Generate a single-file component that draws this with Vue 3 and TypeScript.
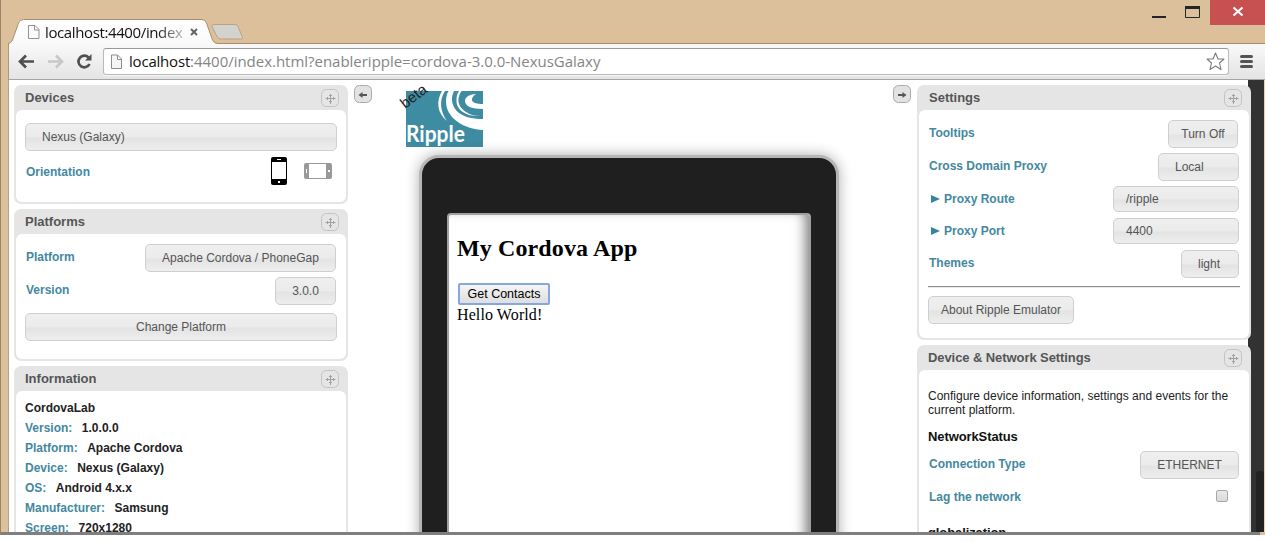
<script setup lang="ts">
interface InfoLine { label: string; value: string }

const info: InfoLine[] = [
  { label: 'Version:', value: '1.0.0.0' },
  { label: 'Platform:', value: 'Apache Cordova' },
  { label: 'Device:', value: 'Nexus (Galaxy)' },
  { label: 'OS:', value: 'Android 4.x.x' },
  { label: 'Manufacturer:', value: 'Samsung' },
  { label: 'Screen:', value: '720x1280' },
]
const moveIcon = 'M9.500 5V15M4.500 9.500H14.500M8 6.500H11M8 12.500H11M6.500 8V11M12.500 8V11'
</script>

<template>
  <div class="window">
    <header class="titlebar">
      <svg class="tabs" width="260" height="26" viewBox="0 0 260 26">
        <defs>
          <linearGradient id="tabfill" x1="0" y1="0" x2="0" y2="1">
            <stop offset="0" stop-color="#fff" /><stop offset="1" stop-color="#f9f9f9" />
          </linearGradient>
        </defs>
        <path d="M8.500 26V25L12 22L18.500 4Q20 .5 23.500 .5H202Q205 .5 206.500 4L212.500 21Q214 24.500 218 24.500V26Z" fill="url(#tabfill)" />
        <path d="M8.500 26V24.500Q11 24 12.500 21L18.500 4Q20 .5 23.500 .5H202Q205 .5 206.500 4L212.500 21Q214 24.500 218 24.500H260" fill="none" stroke="#a88e6e" />
        <path d="M213.500 5.500H235Q237 5.500 238 7.500L242.500 18.500Q243 20 241 20H221Q218 20 217 17.500L212 7.500Q211.500 5.500 213.500 5.500Z" fill="#d2d2ce" stroke="#bca27f" />
        <path d="M28.500 6.500H35L39 10.500V19.500H28.500ZM34.500 6.500V11H39" fill="#fafafa" stroke="#919191" />
        <path d="M191 10L197 16M197 10L191 16" stroke="#626262" stroke-width="1.900" />
      </svg>
      <span class="tabtext">localhost:4400/index</span>
      <svg class="winbtns" width="120" height="26" viewBox="0 0 120 26">
        <rect x="65" y="0" width="55" height="25" fill="#c75050" />
        <rect x="7" y="16" width="14" height="2" fill="#222628" />
        <path d="M40.500 7V17.500H54.500V7" fill="none" stroke="#222628" /><rect x="40" y="6" width="15" height="3" fill="#222628" />
        <path d="M88.500 7.500L97.500 15.500M97.500 7.500L88.500 15.500" stroke="#fff" stroke-width="2.100" />
      </svg>
    </header>

    <div class="toolbar">
      <svg class="nav" width="95" height="35" viewBox="0 0 95 35">
        <g fill="none" stroke-width="2.700">
          <path d="M26 17.500H12.500M18 11.500L12 17.500L18 23.500" stroke="#505050" />
          <path d="M40 17.500H53.500M48 11.500L54 17.500L48 23.500" stroke="#c8c8c8" />
          <path d="M80.500 13.500A5.800 5.800 0 1 0 81.500 20" stroke="#505050" />
        </g>
        <path d="M77 16.500H83.500V10Z" fill="#505050" />
      </svg>
      <div class="urlbox">
        <svg width="13" height="16" viewBox="0 0 13 16"><path d="M1.500 1H7.500L11.500 5V14.500H1.500ZM7.500 1V5.500H11.500" fill="#f5f5f5" stroke="#8d8d8d" /></svg>
        <span class="url"><b>localhost</b>:4400/index.html?enableripple=cordova-3.0.0-NexusGalaxy</span>
        <svg class="star" width="19" height="19" viewBox="0 0 19 19"><path d="M9.500 1L12 7H18L13.500 11L15 17.500L9.500 14L4 17.500L5.500 11L1 7H7Z" fill="#fff" stroke="#7c7c7c" stroke-width="1.100" stroke-linejoin="round" /></svg>
      </div>
      <svg class="menu" width="13" height="13" viewBox="0 0 13 13"><path d="M1.500 1.500H11.500M1.500 6.500H11.500M1.500 11.500H11.500" stroke="#555" stroke-width="3" stroke-linecap="round" /></svg>
    </div>

    <main class="page">
      <aside class="col left">
        <section class="panel devices">
          <h3>Devices<svg width="18" height="18" viewBox="0 0 18 18"><rect x=".5" y=".5" width="17" height="17" rx="5" /><path :d="moveIcon" /></svg></h3>
          <div class="body">
            <button class="btn wide lefttext">Nexus (Galaxy)</button>
            <div class="orient"><label>Orientation</label>
              <svg class="phone" width="16" height="28" viewBox="0 0 16 28"><rect width="16" height="28" rx="2" /><rect x="1" y="5" width="14" height="17" fill="#fff" /><path d="M6 2.500H10" stroke="#fff" /><rect x="7" y="24" width="2" height="2" fill="#fff" /></svg>
              <svg class="land" width="28" height="16" viewBox="0 0 28 16"><rect width="28" height="16" rx="2" fill="#999" /><rect x="5" y="1" width="17" height="14" fill="#fff" /><path d="M2.500 6V10" stroke="#fff" /><rect x="24" y="7" width="2" height="2" fill="#fff" /></svg>
            </div>
          </div>
        </section>
        <section class="panel platforms">
          <h3>Platforms<svg width="18" height="18" viewBox="0 0 18 18"><rect x=".5" y=".5" width="17" height="17" rx="5" /><path :d="moveIcon" /></svg></h3>
          <div class="body">
            <div class="row"><label>Platform</label><button class="btn w191">Apache Cordova / PhoneGap</button></div>
            <div class="row"><label>Version</label><button class="btn w61">3.0.0</button></div>
            <button class="btn wide change">Change Platform</button>
          </div>
        </section>
        <section class="panel information">
          <h3>Information<svg width="18" height="18" viewBox="0 0 18 18"><rect x=".5" y=".5" width="17" height="17" rx="5" /><path :d="moveIcon" /></svg></h3>
          <div class="body">
            <div class="line">CordovaLab</div>
            <div v-for="item in info" :key="item.label" class="line"><span>{{ item.label }}</span>{{ item.value }}</div>
          </div>
        </section>
      </aside>

      <div class="center">
        <svg class="arrow a-left" width="18" height="18" viewBox="0 0 18 18"><rect x=".5" y=".5" width="17" height="17" rx="5" /><path d="M13 10H6" /><path class="head" d="M4.500 10L8.500 7V13Z" /></svg>
        <svg class="arrow a-right" width="18" height="18" viewBox="0 0 18 18"><rect x=".5" y=".5" width="17" height="17" rx="5" /><path d="M5 10H12" /><path class="head" d="M13.500 10L9.500 7V13Z" /></svg>
        <svg class="logo" width="90" height="75" viewBox="0 0 90 75">
          <defs><clipPath id="logoclip"><rect x="8" y="16" width="77" height="56" /></clipPath></defs>
          <rect x="8" y="16" width="77" height="56" fill="#3e8ca1" />
          <g clip-path="url(#logoclip)" fill="#fff">
            <path d="M44 16H47C41 25 42 36 49 46C39 38 38 26 44 16Z" />
            <path d="M50.500 16H56C52 24 54 32 61 38C67 42.500 76 44 85 44V55C66 54 51 44 48.500 31C47.500 26 48 20 50.500 16Z" />
            <path d="M61 16H63.500C58 24 60 32 68 37C73 40 77 41 82 41C68 42 59 35 58.500 27C58.300 22 59 19 61 16Z" />
            <path d="M78 19C71 24 73 29 85 29V34C73 34 67 31 67 26C67 22 72 19 78 19Z" />
            <text x="8" y="67" textLength="59" lengthAdjust="spacingAndGlyphs" class="ripple">Ripple</text>
          </g>
          <text class="beta" transform="translate(7 34) rotate(-37)" textLength="29">beta</text>
        </svg>
        <div class="device">
          <div class="screen">
            <h2>My Cordova App</h2>
            <button class="contacts">Get Contacts</button>
            <p>Hello World!</p>
          </div>
        </div>
      </div>

      <aside class="col right">
        <section class="panel settings">
          <h3>Settings<svg width="18" height="18" viewBox="0 0 18 18"><rect x=".5" y=".5" width="17" height="17" rx="5" /><path :d="moveIcon" /></svg></h3>
          <div class="body">
            <div class="row tooltips"><label>Tooltips</label><button class="btn w70">Turn Off</button></div>
            <div class="row"><label>Cross Domain Proxy</label><button class="btn w81 lefttext">Local</button></div>
            <div class="row short"><label><svg width="10" height="8" viewBox="0 0 10 8"><path d="M1 0L10 4L1 8Z" fill="#36849b" /></svg>Proxy Route</label><button class="btn w126">/ripple</button></div>
            <div class="row short"><label><svg width="10" height="8" viewBox="0 0 10 8"><path d="M1 0L10 4L1 8Z" fill="#36849b" /></svg>Proxy Port</label><button class="btn w126">4400</button></div>
            <div class="row themes"><label>Themes</label><button class="btn w58">light</button></div>
            <hr>
            <button class="btn about">About Ripple Emulator</button>
          </div>
        </section>
        <section class="panel network">
          <h3>Device &amp; Network Settings<svg width="18" height="18" viewBox="0 0 18 18"><rect x=".5" y=".5" width="17" height="17" rx="5" /><path :d="moveIcon" /></svg></h3>
          <div class="body">
            <p>Configure device information, settings and events for the<br>current platform.</p>
            <h4>NetworkStatus</h4>
            <div class="row"><label>Connection Type</label><button class="btn w99">ETHERNET</button></div>
            <div class="row lag"><label>Lag the network</label><i class="check"></i></div>
            <h4 class="global">globalization</h4>
          </div>
        </section>
      </aside>
      <div class="scroll"><i></i></div>
    </main>
    <div class="bottomedge"></div>
  </div>
</template>

<style>
html, body { margin: 0; background: #fff; overflow: hidden; }
</style>
<style scoped>
* { box-sizing: border-box; }
.window { position: relative; width: 1265px; height: 535px; overflow: hidden; background: #dcbf9b; border-left: 1px solid #9c8269; font: 12px/14px "Liberation Sans", Arial, sans-serif; color: #222; }
.window svg { display: block; flex: none; }
.titlebar { position: relative; height: 44px; border-bottom: 1px solid #a88e6e; margin-left: 7px; }
.tabs { position: absolute; left: -8px; top: 19px; }
.tabtext { position: absolute; left: 37px; top: 21px; width: 138px; overflow: hidden; white-space: nowrap; font: 15px/22px "Open Sans", "Noto Sans", sans-serif; letter-spacing: -.38px; color: transparent; background: linear-gradient(90deg, #111 0 112px, #bbb 138px); background-clip: text; -webkit-background-clip: text; }
.winbtns { position: absolute; right: 0; top: 0; }
.toolbar { height: 36px; margin-left: 7px; display: flex; align-items: center; background: linear-gradient(#f9f9f9, #e4e4e4); border-bottom: 1px solid #a5a5a5; border-left: 1px solid #ad967a; }
.nav { margin-left: -1px; }
.urlbox { width: 1126px; height: 27px; margin-left: 0; border: 1px solid #b9b9b9; border-top-color: #999; border-radius: 3px; background: #fff; display: flex; align-items: center; padding-left: 6px; box-shadow: 0 1px #f7f7f7; }
.url { font: 15px/22px "Open Sans", "Noto Sans", sans-serif; letter-spacing: -.02px; color: #858585; margin-left: 6px; white-space: nowrap; position: relative; top: -1px; }
.url b { font-weight: 400; color: #111; letter-spacing: -.2px; }
.star { margin-left: auto; margin-right: 3px; }
.menu { margin-left: 11px; }
.page { position: relative; height: 452px; margin-left: 7px; background: #fff; border-left: 1px solid #b5a18a; display: flex; overflow: hidden; }
.col { width: 334px; flex: none; padding-top: 5px; position: relative; z-index: 1; }
.left { margin-left: 5px; }
.panel { background: #e5e5e5; border-radius: 7px; padding: 0 2px 2px; margin-bottom: 5px; }
.panel h3 { margin: 0; height: 25px; padding: 0 7px 0 9px; display: flex; align-items: center; justify-content: space-between; font: bold 13px/25px "Liberation Sans", Arial, sans-serif; color: #555; }
h3 svg { position: relative; top: .5px; fill: #e5e5e5; stroke: #c2c2c2; }
h3 svg path { fill: none; stroke: #a2a2a2; }
.settings h3 { padding-left: 10px; }
.network h3 { letter-spacing: -.08px; }
.body { background: #fff; border-radius: 6px; padding: 0 9px; }
.devices { height: 119px; } .devices .body { height: 92px; padding-top: 13px; }
.platforms { height: 152px; } .platforms .body { height: 125px; padding-top: 10px; }
.information { height: 230px; } .information .body { height: 203px; padding-top: 7px; }
.settings { height: 255px; } .settings .body { height: 228px; padding-top: 10px; }
.network { height: 230px; } .network .body { height: 203px; padding-top: 19px; }
.btn { height: 28px; border: 1px solid #cfcfcf; border-radius: 5px; padding: 0; background: linear-gradient(#efefef, #ebebeb 50%, #e3e3e3 54%, #eee); font: 12px/14px "Liberation Sans", Arial, sans-serif; color: #555; text-align: center; display: block; white-space: nowrap; }
.btn.wide { width: 312px; } .btn.lefttext { text-align: left; padding-left: 16px; }
.row { height: 28px; margin-bottom: 5px; display: flex; align-items: flex-start; justify-content: space-between; padding-left: 1px; padding-right: 1px; }
label { font-weight: bold; color: #4388a0; line-height: 26px; display: flex; align-items: center; }
.w191 { width: 191px; } .w61 { width: 61px; } .w70 { width: 70px; } .w81 { width: 81px; } .w58 { width: 58px; padding-right: 2px; } .w99 { width: 99px; }
.w126 { width: 126px; height: 26px; text-align: left; padding-left: 12px; }
.change { margin-top: 8px; }
.orient { display: flex; align-items: center; height: 28px; margin-top: 6px; padding-left: 1px; }
.orient label { line-height: 28px; padding-top: 2px; } .phone { margin-left: auto; } .land { margin-left: 17px; margin-right: 5px; }
.line { font-weight: bold; line-height: 20px; height: 20px; } .line span { color: #4388a0; margin-right: 9.500px; }
.center { position: relative; width: 569px; flex: none; }
.arrow { position: absolute; top: 5px; fill: #e2e2e2; stroke: #aaa; }
.arrow path { stroke: #555; stroke-width: 2; } .arrow .head { fill: #555; stroke: none; }
.a-left { left: 6px; } .a-right { left: 545px; }
.logo { position: absolute; left: 50px; top: -5px; overflow: visible; }
.ripple { font: bold 23px "Lato", sans-serif; }
.beta { font: 15px "Liberation Sans", Arial, sans-serif; fill: #222; }
.device { position: absolute; left: 71px; top: 75px; width: 420px; height: 480px; border: 3px solid #b6b6b6; border-radius: 20px; background: #1f1f1f; box-shadow: 0 0 14px rgba(0,0,0,.32); padding: 55px 25px 0; }
.screen { width: 364px; height: 430px; background: #fff; border: 2px solid #a0a0a0; border-radius: 4px; box-shadow: inset -10px 0 13px -7px rgba(0,0,0,.55); padding: 20px 8px; color: #000; font: 16px/19px "Liberation Serif", "Times New Roman", serif; }
.screen h2 { font-size: 24px; line-height: 27px; margin: 0; letter-spacing: .12px; }
.contacts { display: block; margin: 21px 0 0 1px; width: 92px; height: 22px; border: 2px solid #85a5e3; border-radius: 2px; background: linear-gradient(#f5f5f5, #dedede); padding: 0; font: 12.5px/14px "Liberation Sans", Arial, sans-serif; color: #000; white-space: nowrap; }
.screen p { margin: 0; letter-spacing: .1px; }
.right .row { padding-right: 1px; }
.right .tooltips { padding-right: 2px; }
.row.short { height: 26px; margin-bottom: 6px; } label svg { margin: 0 4px 0 1px; }
.themes { margin-bottom: 0; }
hr { border: 0; border-top: 1px solid #8e8e8e; border-bottom: 1px solid #e9e9e9; height: 2px; margin: 8px 0; }
.about { width: 146px; margin-top: 8px; }
.network p { margin: 0; } .network h4 { margin: 12px 0 6px; font: bold 13px/16px "Liberation Sans", Arial, sans-serif; letter-spacing: -.1px; color: #111; }
.row.lag { margin-bottom: 0; } .check { width: 12px; height: 12px; margin-top: 6px; margin-right: 11px; border: 1px solid #a9a9a9; border-radius: 2px; background: linear-gradient(#e9e9e9, #d9d9d9); }
.network .global { margin: 13px 0 0; }
.scroll { position: absolute; left: 1239px; right: 0; top: 0; bottom: 0; background: #323232; border-right: 1px solid #e2d2bf; }
.scroll i { position: absolute; width: 8px; left: 8px; top: 391px; bottom: 0; border-radius: 3px 3px 0 0; background: #222; }
.bottomedge { height: 3px; margin-left: -1px; width: 1260px; background: #7f7f7f; }
</style>
